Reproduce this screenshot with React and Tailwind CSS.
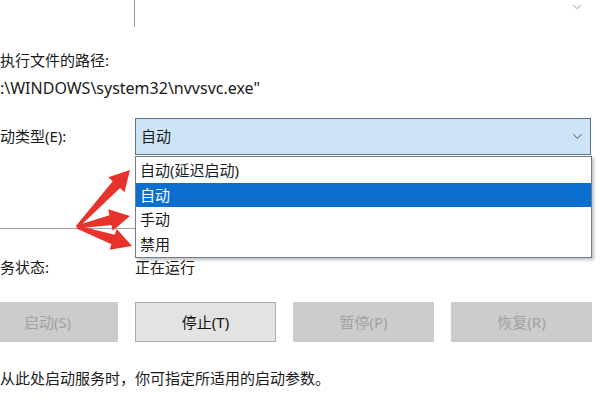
import React from 'react';
import { ChevronDown } from 'lucide-react';

const arrow = (x1, y1, x2, y2) => {
  const len = Math.hypot(x2 - x1, y2 - y1);
  const dx = (x2 - x1) / len;
  const dy = (y2 - y1) / len;
  const nx = -dy;
  const ny = dx;
  const hx = x2 - dx * 20;
  const hy = y2 - dy * 20;
  const p = (x, y, w) => `${x + nx * w},${y + ny * w}`;
  return [
    p(x1, y1, 1.5),
    p(hx, hy, 5),
    p(hx, hy, 11),
    `${x2},${y2}`,
    p(hx, hy, -11),
    p(hx, hy, -5),
    p(x1, y1, -1.5),
  ].join(' ');
};

const options = ['自动(延迟启动)', '自动', '手动', '禁用'];

const buttons = [
  { label: '启动(S)', enabled: false },
  { label: '停止(T)', enabled: true },
  { label: '暂停(P)', enabled: false },
  { label: '恢复(R)', enabled: false },
];

const App = () => {
  return (
    <div
      className="relative w-[600px] h-[400px] overflow-hidden bg-white text-[15px] text-[#1a1a1a]"
      style={{ fontFamily: '"Noto Sans", "Noto Sans CJK SC", sans-serif' }}
    >
      {/* Previous combo box (cut off) */}
      <div className="relative ml-[134px] w-[456px] h-[27px] border-l border-[#9a9a9a]">
        <ChevronDown className="absolute right-[6px] top-[0px] w-[14px] h-[14px] text-[#c4c4c4]" />
      </div>

      {/* Path */}
      <div className="mt-[19px] h-[28px] leading-[28px] whitespace-nowrap">执行文件的路径:</div>
      <div className="h-[28px] leading-[28px] text-[16px] whitespace-nowrap">:\WINDOWS\system32\nvvsvc.exe"</div>

      {/* Startup type */}
      <div className="mt-[16px] flex items-center h-[37px]">
        <div className="w-[135px] whitespace-nowrap">动类型(E):</div>
        <div className="flex items-center justify-between w-[456px] h-[37px] px-[5px] bg-[#cde4f5] border border-[#5f7285]">
          <span>自动</span>
          <ChevronDown className="w-[15px] h-[15px] text-[#4a5560]" strokeWidth={1.6} />
        </div>
      </div>

      <div className="mt-[73px] w-[200px] h-px bg-[#a3a3a3]" />

      {/* Service status */}
      <div className="mt-[24px] flex h-[28px] leading-[28px]">
        <div className="w-[135px] whitespace-nowrap">务状态:</div>
        <div>正在运行</div>
      </div>

      {/* Buttons */}
      <div className="mt-[21px] ml-[-23px] flex gap-[17px]">
        {buttons.map((b) => (
          <div
            key={b.label}
            className={
              b.enabled
                ? 'w-[141px] h-[40px] flex items-center justify-center bg-[#e3e3e3] border border-[#adadad] text-[#111]'
                : 'w-[141px] h-[40px] flex items-center justify-center bg-[#cccccc] border border-[#cccccc] text-[#a2a2a2]'
            }
          >
            {b.label}
          </div>
        ))}
      </div>

      <div className="mt-[22px] h-[28px] leading-[28px] whitespace-nowrap">
        从此处启动服务时，你可指定所适用的启动参数。
      </div>

      {/* Open dropdown list */}
      <div className="absolute left-[135px] top-[156px] w-[457px] h-[102px] bg-white border border-[#6e7e8c] shadow-[2px_2px_3px_rgba(0,0,0,0.25)] py-px">
        {options.map((o, i) => (
          <div
            key={o}
            className={
              i === 1
                ? 'h-[24.5px] leading-[24.5px] px-[4px] bg-[#0b6fcf] text-white'
                : 'h-[24.5px] leading-[24.5px] px-[4px]'
            }
          >
            {o}
          </div>
        ))}
      </div>

      {/* Red annotation arrows */}
      <svg className="absolute left-[60px] top-[150px] w-[85px] h-[110px]" viewBox="0 0 85 110">
        <polygon points={arrow(17, 77, 70, 20)} fill="#e8322b" />
        <polygon points={arrow(17, 77, 70, 66)} fill="#e8322b" />
        <polygon points={arrow(17, 77, 72, 96)} fill="#e8322b" />
      </svg>
    </div>
  );
};

export default App;
